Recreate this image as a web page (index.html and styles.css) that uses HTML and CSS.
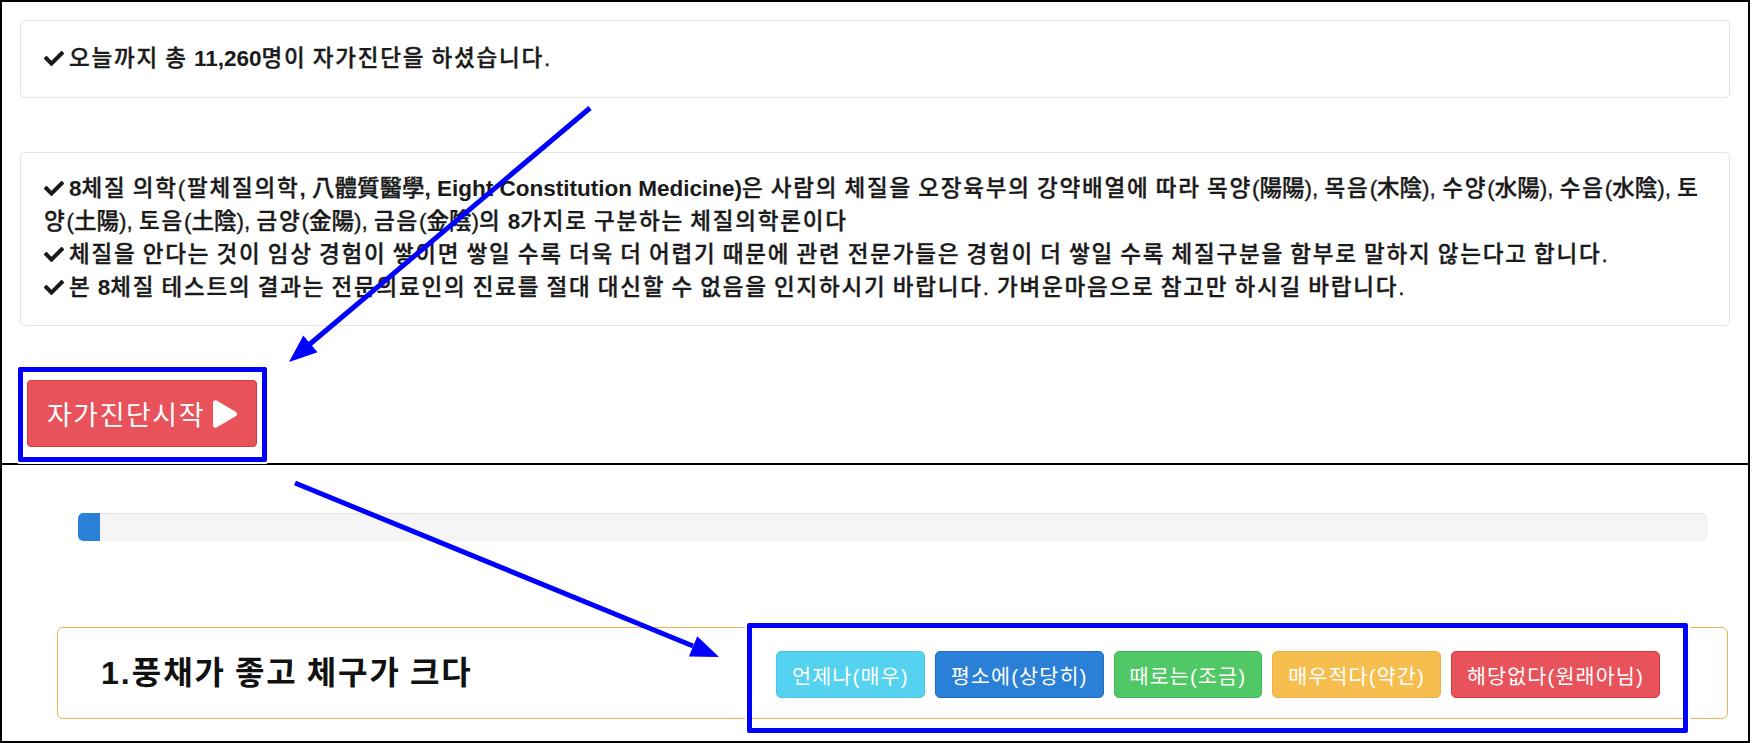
FILE: index.html
```
<!DOCTYPE html>
<html lang="ko">
<head>
<meta charset="utf-8">
<title>8체질 자가진단</title>
<link rel="stylesheet" href="styles.css">
</head>
<body>
<div class="frame">
  <section class="top">
    <div class="well well-count">
      <svg class="check" viewBox="0 0 512 373"><path d="M173.9 370.4L7.5 204c-10-10-10-26.2 0-36.2l36.2-36.2c10-10 26.2-10 36.2 0L192 243.7 432.1 3.6c10-10 26.2-10 36.2 0l36.2 36.2c10 10 10 26.2 0 36.2L210.1 370.4c-10 10-26.2 10-36.2 0z"/></svg>오늘까지 총 <b>11,260</b>명이 자가진단을 하셨습니다.
    </div>
    <div class="well well-info">
      <div class="line"><svg class="check" viewBox="0 0 512 373"><path d="M173.9 370.4L7.5 204c-10-10-10-26.2 0-36.2l36.2-36.2c10-10 26.2-10 36.2 0L192 243.7 432.1 3.6c10-10 26.2-10 36.2 0l36.2 36.2c10 10 10 26.2 0 36.2L210.1 370.4c-10 10-26.2 10-36.2 0z"/></svg><b>8</b>체질 의학(팔체질의학<b>,</b> <span class="nx">八體質醫學</span><b>, Eight Constitution Medicine)</b>은 사람의 체질을 오장육부의 강약배열에 따라 목양<span class="nx">(陽陽),</span> 목음<span class="nx">(木陰),</span> 수양<span class="nx">(水陽),</span> 수음<span class="nx">(水陰),</span> 토<br>양<span class="nx">(土陽),</span> 토음<span class="nx">(土陰),</span> 금양<span class="nx">(金陽),</span> 금음<span class="nx">(金陰)</span>의 <b>8</b>가지로 구분하는 체질의학론이다</div>
      <div class="line"><svg class="check" viewBox="0 0 512 373"><path d="M173.9 370.4L7.5 204c-10-10-10-26.2 0-36.2l36.2-36.2c10-10 26.2-10 36.2 0L192 243.7 432.1 3.6c10-10 26.2-10 36.2 0l36.2 36.2c10 10 10 26.2 0 36.2L210.1 370.4c-10 10-26.2 10-36.2 0z"/></svg>체질을 안다는 것이 임상 경험이 쌓이면 쌓일 수록 더욱 더 어렵기 때문에 관련 전문가들은 경험이 더 쌓일 수록 체질구분을 함부로 말하지 않는다고 합니다.</div>
      <div class="line"><svg class="check" viewBox="0 0 512 373"><path d="M173.9 370.4L7.5 204c-10-10-10-26.2 0-36.2l36.2-36.2c10-10 26.2-10 36.2 0L192 243.7 432.1 3.6c10-10 26.2-10 36.2 0l36.2 36.2c10 10 10 26.2 0 36.2L210.1 370.4c-10 10-26.2 10-36.2 0z"/></svg>본 <b>8</b>체질 테스트의 결과는 전문의료인의 진료를 절대 대신할 수 없음을 인지하시기 바랍니다. 가벼운마음으로 참고만 하시길 바랍니다.</div>
    </div>
    <button class="btn-start" type="button">자가진단시작<svg class="play" viewBox="0 0 448 512"><path d="M424.4 214.7L72.4 6.6C43.8-10.3 0 6.1 0 47.9V464c0 37.5 40.7 60.1 72.4 41.3l352-208c31.4-18.5 31.5-64.1 0-82.6z"/></svg></button>
  </section>
  <section class="bottom">
    <div class="progress"><div class="progress-bar" style="width:22px"></div></div>
    <div class="question">
      <h3 class="question-title">1.풍채가 좋고 체구가 크다</h3>
      <div class="answers">
        <button class="ans ans-info" type="button">언제나(매우)</button>
        <button class="ans ans-primary" type="button">평소에(상당히)</button>
        <button class="ans ans-success" type="button">때로는(조금)</button>
        <button class="ans ans-warning" type="button">매우적다(약간)</button>
        <button class="ans ans-danger" type="button">해당없다(원래아님)</button>
      </div>
    </div>
  </section>
  <div class="mark mark-start"></div>
  <div class="mark mark-answers"></div>
  <svg class="arrows" width="1753" height="743" viewBox="0 0 1753 743">
    <line x1="590" y1="108" x2="310" y2="344" />
    <polygon points="289,362 317.5,352.3 303.3,335.5" />
    <line x1="295" y1="483" x2="693" y2="646" />
    <polygon points="719,657 688.9,656.6 697.3,636.2" />
  </svg>
</div>
</body>
</html>
```

FILE: styles.css
```
* { box-sizing: border-box; }
html, body { margin: 0; padding: 0; background: #fff; }
body {
  font-family: "Liberation Sans", "Noto Sans CJK KR", sans-serif;
  color: #222;
}
.frame {
  position: relative;
  width: 1750px;
  height: 743px;
  border: 2px solid #000;
  overflow: hidden;
}
.top {
  height: 463px;
  padding: 18px 18px 0;
  border-bottom: 2px solid #000;
}
.well {
  border: 1px solid #e3e3e3;
  border-radius: 5px;
  background: #fff;
  padding: 22px 23px;
  font-size: 22.5px;
  line-height: 32px;
  font-weight: 500;
  letter-spacing: 1.8px;
  word-spacing: -1.8px;
  white-space: nowrap;
  color: #1a1a1a;
  -webkit-text-stroke: 0.35px #1a1a1a;
}
.well b { font-weight: 700; letter-spacing: 0; word-spacing: 0; -webkit-text-stroke: 0; }
.well .nx { letter-spacing: 0; word-spacing: 0; }
.well-count { margin-bottom: 54px; }
.well-info {
  margin-bottom: 54px;
  padding: 19px 23px 21px;
  line-height: 33px;
}
.check {
  width: 20px;
  height: 15px;
  margin-right: 5px;
  vertical-align: 0;
  fill: #1a1a1a;
}
.btn-start {
  margin-left: 7px;
  height: 67px;
  padding: 0 19px;
  display: inline-flex;
  align-items: center;
  gap: 8px;
  background: #e8525a;
  border: 1px solid #d8373f;
  border-radius: 4px;
  color: #fff;
  font-family: "Liberation Sans", "Noto Sans CJK KR", sans-serif;
  font-size: 27px;
  letter-spacing: 1.5px;
  font-weight: 400;
}
.play { width: 24px; height: 28px; fill: #fff; }
.bottom {
  padding-top: 48px;
}
.progress {
  margin-left: 76px;
  width: 1629px;
  height: 28px;
  background: #f5f5f6;
  border-radius: 5px;
  box-shadow: inset 0 1px 2px rgba(0,0,0,0.08);
  overflow: hidden;
}
.progress-bar {
  height: 100%;
  background: #2a80d6;
  border-radius: 5px 0 0 5px;
}
.question {
  margin-top: 86px;
  margin-left: 55px;
  width: 1671px;
  height: 92px;
  border: 1px solid #f0b356;
  border-radius: 6px;
  display: flex;
  align-items: center;
  justify-content: space-between;
  padding: 0 67px 0 43px;
}
.question-title {
  margin: 0;
  font-size: 32px;
  font-weight: 700;
  letter-spacing: 2px;
  word-spacing: -2px;
  color: #111;
  line-height: 1;
}
.answers {
  display: flex;
  gap: 10px;
  margin-top: 3px;
}
.ans {
  height: 47px;
  padding: 0 15px;
  border-radius: 5px;
  border: 1px solid transparent;
  color: #fff;
  font-family: "Liberation Sans", "Noto Sans CJK KR", sans-serif;
  font-size: 20.7px;
  letter-spacing: 1.1px;
  font-weight: 400;
  display: flex;
  align-items: center;
}
.ans-info { background: #55d2ef; border-color: #4ac6e4; }
.ans-primary { background: #2a80d6; border-color: #1f6dbd; }
.ans-success { background: #50c866; border-color: #43b657; }
.ans-warning { background: #f6be4e; border-color: #eeb040; }
.ans-danger { background: #e8525a; border-color: #d8373f; }
.mark {
  position: absolute;
  border: 5px solid #0000ff;
  border-radius: 2px;
  box-shadow: 0 0 0 2px #fff;
}
.mark-start { left: 16px; top: 365px; width: 249px; height: 95px; }
.mark-answers { left: 745px; top: 621px; width: 941px; height: 110px; }
.arrows {
  position: absolute;
  left: -2px;
  top: -2px;
  pointer-events: none;
}
.arrows line { stroke: #0000ff; stroke-width: 5; }
.arrows polygon { fill: #0000ff; }
```
